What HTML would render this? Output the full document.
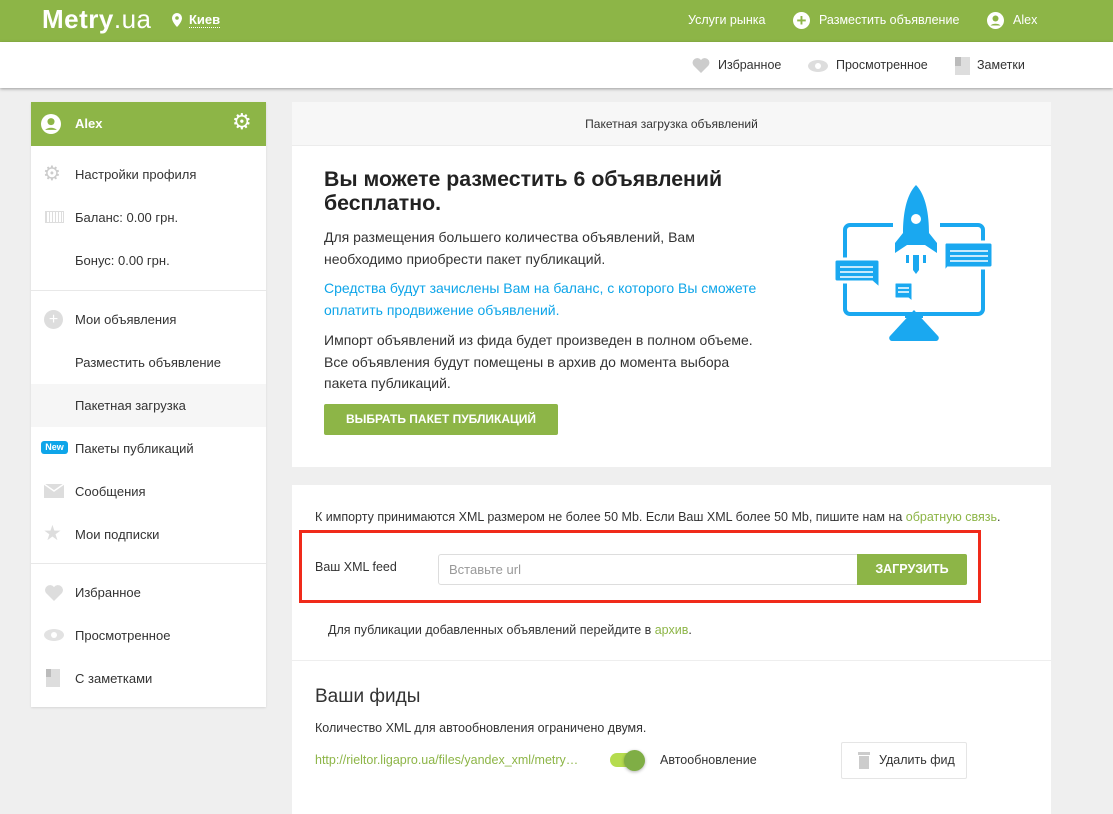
<!DOCTYPE html>
<html><head><meta charset="utf-8"><style>
*{margin:0;padding:0;box-sizing:border-box}
body{width:1113px;height:814px;overflow:hidden;background:#efefef;font-family:"Liberation Sans","DejaVu Sans",sans-serif;color:#333;position:relative;font-size:13px}
.a{position:absolute;white-space:nowrap}
.g{color:#8db547}
</style></head><body>
<div class="a" style="left:0;top:0;width:1113px;height:42px;background:#8db547"></div>
<div class="a" style="left:42px;top:4px;color:#fff;font-size:26px;font-weight:bold;letter-spacing:0.5px">Metry<span style="font-weight:normal">.ua</span></div>
<svg class="a" style="left:172px;top:13px" width="10" height="14" viewBox="0 0 10 14"><path d="M5 0a5 5 0 0 0-5 5c0 4 5 9 5 9s5-5 5-9a5 5 0 0 0-5-5z" fill="#fff"/><circle cx="5" cy="5" r="1.8" fill="#8db547"/></svg>
<div class="a" style="left:189px;top:12px;color:#fff;font-size:13px;font-weight:bold;border-bottom:1px dotted #fff;line-height:15px">Киев</div>
<div class="a" style="left:688px;top:13px;color:#fff;font-size:12.5px">Услуги рынка</div>
<div class="a" style="left:793px;top:12px;width:17px;height:17px;border-radius:50%;background:#fff;color:#8db547;font-weight:bold;font-size:17px;line-height:17px;text-align:center">+</div>
<div class="a" style="left:819px;top:13px;color:#fff;font-size:12.5px">Разместить объявление</div>
<svg class="a" style="left:987px;top:12px" width="17" height="17" viewBox="0 0 17 17"><circle cx="8.5" cy="8.5" r="8.5" fill="#fff"/><circle cx="8.5" cy="6.5" r="3" fill="#8db547"/><path d="M3.5 13.5a6 4 0 0 1 10 0" fill="#8db547"/></svg>
<div class="a" style="left:1013px;top:13px;color:#fff;font-size:12.5px">Alex</div>
<div class="a" style="left:0;top:42px;width:1113px;height:46px;background:#fff;box-shadow:0 1px 3px rgba(0,0,0,.35)"></div>
<svg class="a" style="left:692px;top:58px" width="18" height="15" viewBox="0 0 18 15"><path d="M9 15L1.5 7.5A4.3 4.3 0 0 1 9 2a4.3 4.3 0 0 1 7.5 5.5z" fill="#ccc"/></svg>
<div class="a" style="left:718px;top:58px;font-size:12.5px">Избранное</div>
<svg class="a" style="left:808px;top:60px" width="20" height="12"><ellipse cx="10" cy="6" rx="10" ry="6" fill="#ddd"/><circle cx="10" cy="6" r="3" fill="#fff"/></svg>
<div class="a" style="left:836px;top:58px;font-size:12.5px">Просмотренное</div>
<div class="a" style="left:955px;top:57px;width:15px;height:18px;background:#ddd"></div>
<div class="a" style="left:955px;top:57px;width:6px;height:9px;background:#bbb"></div>
<div class="a" style="left:977px;top:58px;font-size:12.5px">Заметки</div>

<!-- sidebar -->
<div class="a" style="left:31px;top:102px;width:235px;height:605px;background:#fff;box-shadow:0 1px 2px rgba(0,0,0,.1)"></div>
<div class="a" style="left:31px;top:102px;width:235px;height:44px;background:#8db547"></div>
<svg class="a" style="left:41px;top:114px" width="20" height="20" viewBox="0 0 17 17"><circle cx="8.5" cy="8.5" r="8.5" fill="#fff"/><circle cx="8.5" cy="6.5" r="3" fill="#8db547"/><path d="M3.5 13.5a6 4 0 0 1 10 0" fill="#8db547"/></svg>
<div class="a" style="left:75px;top:116px;color:#fff;font-size:13px;font-weight:bold">Alex</div>
<div class="a" style="left:232px;top:111px;color:#fff;font-size:22px;line-height:22px">⚙</div>
<div class="a" style="left:31px;top:384px;width:235px;height:43px;background:#f6f6f6"></div>
<div class="a" style="left:31px;top:290px;width:235px;height:1px;background:#e8e8e8"></div>
<div class="a" style="left:31px;top:563px;width:235px;height:1px;background:#e8e8e8"></div>
<div class="a" style="left:43px;top:164px;color:#ccc;font-size:20px;line-height:20px">⚙</div>
<div class="a" style="left:45px;top:211px;width:19px;height:12px;border:1px solid #ddd;background:repeating-linear-gradient(90deg,#ddd 0 1px,#fff 1px 3px)"></div>
<div class="a" style="left:44px;top:310px;width:19px;height:19px;border-radius:50%;background:#ddd;color:#fff;text-align:center;font-size:16px;line-height:19px">+</div>
<div class="a" style="left:41px;top:441px;width:27px;height:13px;border-radius:3px;background:#0ea5e9;color:#fff;font-size:9px;font-weight:bold;text-align:center;line-height:13px">New</div>
<div class="a" style="left:44px;top:484px;width:20px;height:14px;background:#ddd"></div>
<svg class="a" style="left:44px;top:484px" width="20" height="14"><path d="M0 0L10 7L20 0" fill="none" stroke="#fff" stroke-width="1.5"/></svg>
<div class="a" style="left:43px;top:523px;color:#ddd;font-size:21px;line-height:21px">★</div>
<svg class="a" style="left:44px;top:585px" width="20" height="16" viewBox="0 0 18 15"><path d="M9 15L1.5 7.5A4.3 4.3 0 0 1 9 2a4.3 4.3 0 0 1 7.5 5.5z" fill="#ddd"/></svg>
<svg class="a" style="left:44px;top:629px" width="20" height="12"><ellipse cx="10" cy="6" rx="10" ry="6" fill="#e2e2e2"/><circle cx="10" cy="6" r="3" fill="#fff"/></svg>
<div class="a" style="left:46px;top:669px;width:14px;height:18px;background:#ddd"></div>
<div class="a" style="left:46px;top:669px;width:5px;height:8px;background:#bbb"></div>
<div class="a" style="left:75px;top:167px">Настройки профиля</div>
<div class="a" style="left:75px;top:210px">Баланс: 0.00 грн.</div>
<div class="a" style="left:75px;top:253px">Бонус: 0.00 грн.</div>
<div class="a" style="left:75px;top:312px">Мои объявления</div>
<div class="a" style="left:75px;top:355px">Разместить объявление</div>
<div class="a" style="left:75px;top:398px">Пакетная загрузка</div>
<div class="a" style="left:75px;top:441px">Пакеты публикаций</div>
<div class="a" style="left:75px;top:484px">Сообщения</div>
<div class="a" style="left:75px;top:527px">Мои подписки</div>
<div class="a" style="left:75px;top:585px">Избранное</div>
<div class="a" style="left:75px;top:628px">Просмотренное</div>
<div class="a" style="left:75px;top:671px">С заметками</div>

<!-- main card 1 -->
<div class="a" style="left:292px;top:102px;width:759px;height:365px;background:#fff"></div>
<div class="a" style="left:292px;top:102px;width:759px;height:44px;background:#f7f7f7;border-bottom:1px solid #ececec"></div>
<div class="a" style="left:292px;top:117px;width:759px;text-align:center;font-size:12px">Пакетная загрузка объявлений</div>
<div class="a" style="left:324px;top:167px;font-size:21.3px;font-weight:bold;line-height:24px;color:#222">Вы можете разместить 6 объявлений<br>бесплатно.</div>
<div class="a" style="left:324px;top:227px;font-size:14px;line-height:21.5px">Для размещения большего количества объявлений, Вам<br>необходимо приобрести пакет публикаций.</div>
<div class="a" style="left:324px;top:278px;font-size:14px;line-height:21.5px;color:#0ea5e9">Средства будут зачислены Вам на баланс, с которого Вы сможете<br>оплатить продвижение объявлений.</div>
<div class="a" style="left:324px;top:330px;font-size:14px;line-height:21.5px">Импорт объявлений из фида будет произведен в полном объеме.<br>Все объявления будут помещены в архив до момента выбора<br>пакета публикаций.</div>
<div class="a" style="left:324px;top:404px;width:234px;height:31px;background:#8db547;color:#fff;font-size:12px;font-weight:bold;text-align:center;line-height:31px;border-radius:2px">ВЫБРАТЬ ПАКЕТ ПУБЛИКАЦИЙ</div>
<svg class="a" style="left:800px;top:160px" width="220" height="200" viewBox="0 0 220 200">
<rect x="45" y="65" width="138" height="89" rx="5" fill="none" stroke="#1aa8f0" stroke-width="4"/>
<rect x="93" y="60" width="47" height="12" fill="#fff"/>
<path d="M114 150l-24 26a3 3 0 0 0 2 5h44a3 3 0 0 0 2-5z" fill="#1aa8f0"/>
<rect x="105" y="152" width="18" height="6" fill="#1aa8f0"/>
<g fill="#1aa8f0" stroke="#fff" stroke-width="3">
<path d="M37 99h40a3 3 0 0 1 3 3v27l-8-7H37a3 3 0 0 1-3-3v-17a3 3 0 0 1 3-3z"/>
<path d="M146 82h44a3 3 0 0 1 3 3v20a3 3 0 0 1-3 3h-42l-4 5v-28a3 3 0 0 1 2-3z"/>
<path d="M96 122h15a2 2 0 0 1 2 2v19l-5-4H96a2 2 0 0 1-2-2v-13a2 2 0 0 1 2-2z"/>
</g>
<g fill="#1aa8f0">
<path d="M116 25c-10 10-13 30-13 48l-8 10v10l12-8h18l12 8v-10l-8-10c0-18-3-38-13-48z"/>
<path d="M106 95h3v8h-3zM113 95h6v15l-3 4-3-4zM123 95h3v8h-3z"/>
</g>
<rect x="90" y="0" width="50" height="0" fill="none"/>
<circle cx="116" cy="59" r="5" fill="#fff"/>
<g stroke="#fff" stroke-width="1.5"><path d="M40 107h33M40 112h33M40 117h33M150 91h38M150 96h38M150 101h38M98 128h11M98 132h11"/></g>
</svg>

<!-- main card 2 -->
<div class="a" style="left:292px;top:485px;width:759px;height:329px;background:#fff"></div>
<div class="a" style="left:292px;top:660px;width:759px;height:1px;background:#eee"></div>
<div class="a" style="left:315px;top:510px;font-size:12.5px">К импорту принимаются XML размером не более 50 Mb. Если Ваш XML более 50 Mb, пишите нам на <span class="g">обратную связь</span>.</div>
<div class="a" style="left:299px;top:530px;width:682px;height:73px;border:3px solid #f02a1a"></div>
<div class="a" style="left:315px;top:560px;font-size:12.5px">Ваш XML feed</div>
<div class="a" style="left:438px;top:554px;width:420px;height:31px;border:1px solid #ddd;border-radius:3px 0 0 3px;background:#fff"></div>
<div class="a" style="left:449px;top:562px;font-size:13px;color:#999">Вставьте url</div>
<div class="a" style="left:857px;top:554px;width:110px;height:31px;background:#8db547;color:#fff;font-weight:bold;font-size:12.5px;text-align:center;line-height:31px;border-radius:0 2px 2px 0">ЗАГРУЗИТЬ</div>
<div class="a" style="left:328px;top:623px;font-size:12.5px">Для публикации добавленных объявлений перейдите в <span class="g">архив</span>.</div>
<div class="a" style="left:315px;top:686px;font-size:19px;color:#333">Ваши фиды</div>
<div class="a" style="left:315px;top:721px;font-size:12.5px">Количество XML для автообновления ограничено двумя.</div>
<div class="a" style="left:315px;top:753px;font-size:12.5px;color:#8db547">http://rieltor.ligapro.ua/files/yandex_xml/metry…</div>
<div class="a" style="left:610px;top:753px;width:34px;height:14px;border-radius:7px;background:#b5dc4e"></div>
<div class="a" style="left:624px;top:750px;width:21px;height:21px;border-radius:50%;background:#7fae45;box-shadow:0 1px 3px rgba(0,0,0,.3)"></div>
<div class="a" style="left:660px;top:753px;font-size:12.5px">Автообновление</div>
<div class="a" style="left:841px;top:742px;width:126px;height:37px;border:1px solid #e5e5e5;border-radius:2px"></div>
<div class="a" style="left:858px;top:752px;width:12px;height:3px;background:#ccc"></div>
<div class="a" style="left:859px;top:756px;width:10px;height:13px;background:#ccc"></div>
<div class="a" style="left:879px;top:753px;font-size:12.5px">Удалить фид</div>
</body></html>
